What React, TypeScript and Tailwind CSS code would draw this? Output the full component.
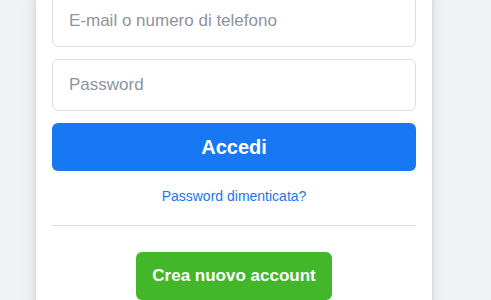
const LoginCard = () => {
  return (
    <div className="ml-[36px] -mt-[21px] w-[396px] rounded-lg bg-white px-4 pt-4 pb-7 shadow-[0_2px_4px_rgba(0,0,0,0.1),0_8px_16px_rgba(0,0,0,0.1)]">
      <form className="flex flex-col gap-3" onSubmit={(e) => e.preventDefault()}>
        <input
          type="text"
          placeholder="E-mail o numero di telefono"
          className="h-[52px] w-full rounded-md border border-[#dddfe2] px-4 text-[17px] text-[#1d2129] outline-none placeholder:text-[#8d949e] focus:border-[#1877f2]"
        />
        <input
          type="password"
          placeholder="Password"
          className="h-[52px] w-full rounded-md border border-[#dddfe2] px-4 text-[17px] text-[#1d2129] outline-none placeholder:text-[#8d949e] focus:border-[#1877f2]"
        />
        <button
          type="submit"
          className="h-12 w-full rounded-md bg-[#1877f2] text-[20px] font-bold leading-[48px] text-white hover:bg-[#166fe5]"
        >
          Accedi
        </button>
      </form>
      <div className="mt-4 text-center text-[14px] leading-[19px]">
        <a href="#" className="text-[#1877f2] hover:underline">
          Password dimenticata?
        </a>
      </div>
      <div className="mt-[19px] border-b border-[#dadde1]" />
      <div className="mt-[26px] flex justify-center">
        <button className="h-12 rounded-md bg-[#42b72a] px-4 text-[17px] font-bold text-white hover:bg-[#36a420]">
          Crea nuovo account
        </button>
      </div>
    </div>
  );
};

export default function App() {
  return (
    <div className="h-[300px] w-full overflow-hidden bg-[#f0f2f5] font-['Liberation_Sans',Arial,sans-serif]">
      <LoginCard />
    </div>
  );
}
